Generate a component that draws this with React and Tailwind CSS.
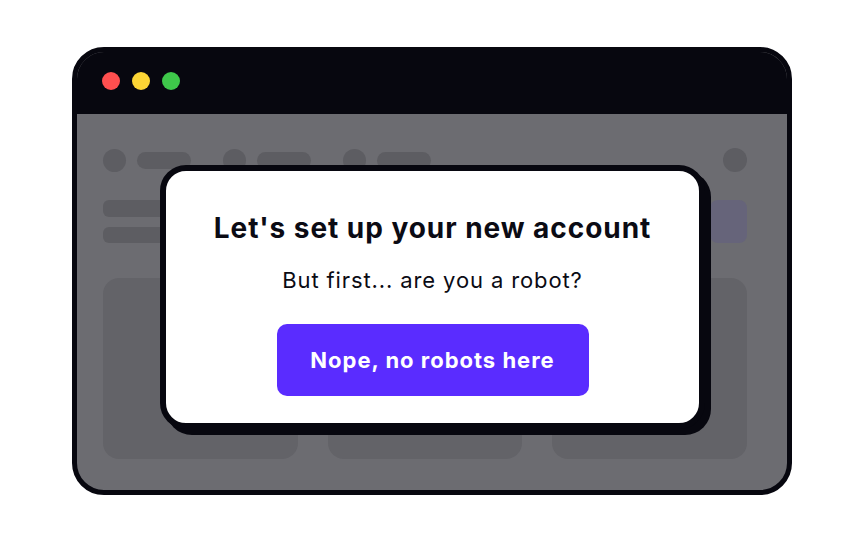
const Pill = ({ className }) => <div className={`rounded-full bg-[#5d5d62] ${className}`} />;

const NavItem = () => (
  <div className="flex items-center gap-[11px]">
    <Pill className="h-[23px] w-[23px]" />
    <Pill className="h-[17px] w-[54px]" />
  </div>
);

export default function App() {
  return (
    <div
      className="flex h-[540px] w-[864px] items-center justify-center bg-white"
      style={{ fontFamily: 'Inter, "Noto Sans", sans-serif' }}
    >
      <div className="relative mt-[2px] w-[720px]">
        {/* Browser window */}
        <div className="flex h-[448px] flex-col overflow-hidden rounded-[32px] border-[5px] border-[#07070f] bg-[#6c6c71]">
          <div className="flex h-[62px] shrink-0 items-center gap-[12px] bg-[#07070f] pb-[4px] pl-[25px]">
            <div className="h-[18px] w-[18px] rounded-full bg-[#ff4f4f]" />
            <div className="h-[18px] w-[18px] rounded-full bg-[#fcd535]" />
            <div className="h-[18px] w-[18px] rounded-full bg-[#3ec84a]" />
          </div>

          {/* Dimmed page behind the modal */}
          <div className="flex flex-1 flex-col pl-[26px] pr-[40px] pt-[34px] pb-[31px]">
            <div className="flex items-center justify-between">
              <div className="flex items-center gap-[32px]">
                <NavItem />
                <NavItem />
                <NavItem />
              </div>
              <Pill className="h-[24px] w-[24px]" />
            </div>

            <div className="mt-[28px] flex items-start justify-between">
              <div className="flex flex-col gap-[10px]">
                <div className="h-[17px] w-[220px] rounded-[6px] bg-[#5d5d62]" />
                <div className="h-[16px] w-[220px] rounded-[6px] bg-[#5d5d62]" />
              </div>
              <div className="h-[43px] w-[37px] rounded-[8px] bg-[#66647a]" />
            </div>

            <div className="mt-[35px] grid flex-1 grid-cols-3 gap-[30px]">
              <div className="rounded-[16px] bg-[#636368]" />
              <div className="rounded-[16px] bg-[#636368]" />
              <div className="rounded-[16px] bg-[#636368]" />
            </div>
          </div>
        </div>

        {/* Modal */}
        <div className="absolute left-[88px] top-[118px] flex h-[264px] w-[545px] flex-col items-center rounded-[26px] border-[6px] border-[#07070f] bg-white pt-[40px] shadow-[6px_6px_0_0_#07070f]">
          <h1 className="text-[28px] font-bold leading-[34px] tracking-[0.034em] text-[#0b0b14]">
            Let's set up your new account
          </h1>
          <p className="mt-[21px] text-[22px] leading-[28px] tracking-[0.04em] text-[#0b0b14]">
            But first... are you a robot?
          </p>
          <button className="mt-[30px] h-[72px] w-[312px] rounded-[10px] bg-[#5a2cff] text-[22px] font-bold tracking-[0.045em] text-white">
            Nope, no robots here
          </button>
        </div>
      </div>
    </div>
  );
}
